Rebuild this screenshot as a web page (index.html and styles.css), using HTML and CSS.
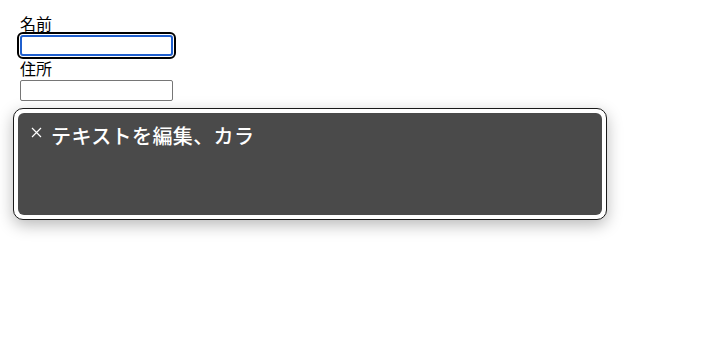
FILE: index.html
```html
<!DOCTYPE html>
<html lang="ja">
<head>
    <meta charset="utf-8">
    <meta name="viewport" content="width=device-width,initial-scale=1.0">
    <title>フォーム</title>
    <link rel="stylesheet" href="styles.css">
</head>
<body>
    <form class="form">
        <label class="field">
            <span class="field-label">名前</span>
            <input class="field-input is-focused" type="text" name="name">
        </label>
        <label class="field">
            <span class="field-label">住所</span>
            <input class="field-input" type="text" name="address">
        </label>
    </form>
    <div class="caption">
        <div class="caption-inner">
            <span class="caption-close" aria-label="閉じる">
                <svg width="11" height="11" viewBox="0 0 11 11">
                    <path d="M1 1 L10 10 M10 1 L1 10" stroke="#fff" stroke-width="1.2" fill="none"/>
                </svg>
            </span>
            <span class="caption-text">テキストを編集、カラ</span>
        </div>
    </div>
</body>
</html>
```
FILE: styles.css
```css
html, body {
    margin: 0;
    background: #fff;
}

body {
    min-height: 100vh;
    box-sizing: border-box;
    padding: 11px 0 0 20px;
    font-family: "Noto Sans CJK JP", "Noto Sans", sans-serif;
    color: #000;
}

.form {
    margin: 0;
}

.field {
    display: flex;
    flex-direction: column;
    align-items: flex-start;
}

.field-label {
    font-size: 16px;
    line-height: 24px;
}

.field-input {
    width: 153px;
    height: 21px;
    box-sizing: border-box;
    margin: 0;
    padding: 1px 2px;
    border: 1px solid #767676;
    border-radius: 2px;
    background: #fff;
    font-size: 13px;
}

.field-input.is-focused {
    border: 2px solid #1f5fce;
    border-radius: 3px;
    outline: 2px solid #000;
    outline-offset: 1px;
}

.caption {
    width: 594px;
    box-sizing: border-box;
    margin: 7px 0 0 -7px;
    padding: 4px;
    background: #fff;
    border: 1px solid #1a1a1a;
    border-radius: 10px;
    box-shadow: 0 5px 16px rgba(0, 0, 0, 0.28);
}

.caption-inner {
    height: 102px;
    box-sizing: border-box;
    padding: 9px 13px;
    background: #4a4a4a;
    border-radius: 6px;
    display: flex;
    align-items: flex-start;
    gap: 9px;
}

.caption-close {
    display: flex;
    margin-top: 5px;
}

.caption-text {
    color: #fff;
    font-size: 20px;
    font-weight: 500;
    line-height: 28px;
    letter-spacing: 0.4px;
}
```
